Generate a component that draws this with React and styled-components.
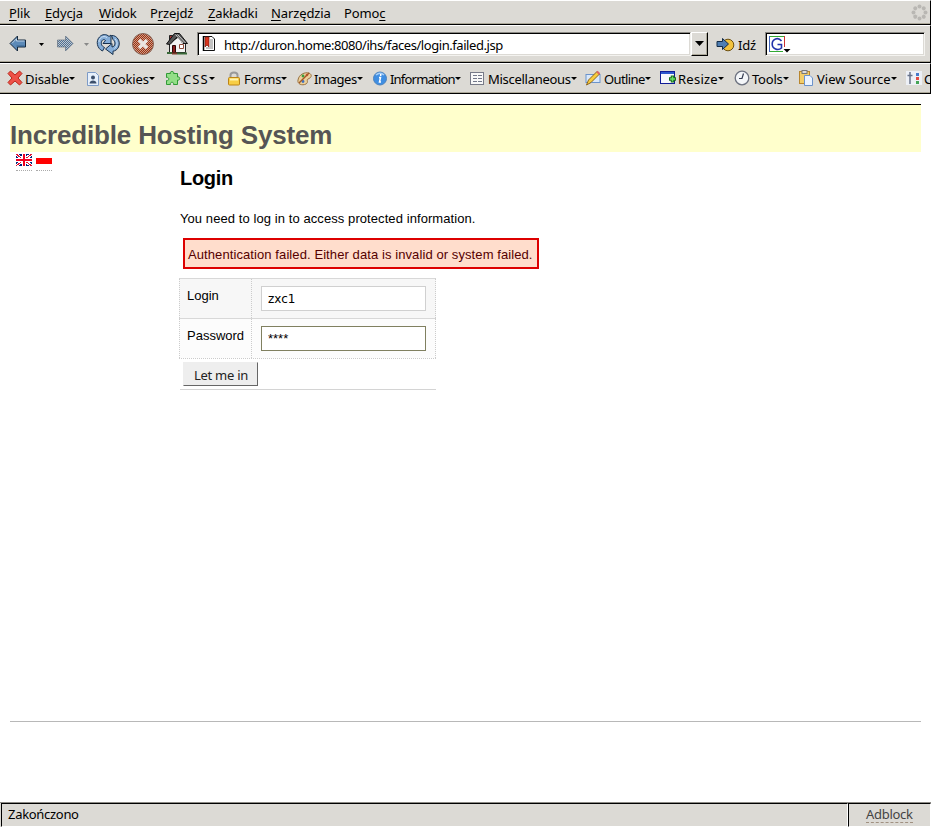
import React from "react";
import styled, { createGlobalStyle, css } from "styled-components";

const Global = createGlobalStyle`
  * { box-sizing: border-box; }
  html, body { margin: 0; height: 827px; overflow: hidden; background: #fff; }
`;

const ui = css`
  font-family: "Noto Sans", "Open Sans", sans-serif;
  font-size: 13px;
  line-height: 18px;
  color: #000;
  white-space: pre;
`;

const Window = styled.div`
  width: 931px;
  height: 827px;
  display: flex;
  flex-direction: column;
  background: #fff;
  overflow: hidden;
`;

const Bar = styled.div`
  ${ui}
  flex: none;
  display: flex;
  height: ${(p) => p.$h}px;
  padding-left: ${(p) => p.$pad || 0}px;
  background: #dcdad5;
  border-top: 1px solid #fff;
  border-right: 1px solid #000;
  border-bottom: 1px solid #000;
  box-shadow: inset 0 -1px 0 #aca899;
  overflow: hidden;
`;

const MenuItem = styled.div`
  flex: none;
  width: ${(p) => p.$w}px;
  padding-top: 3px;
  letter-spacing: -0.12px;
`;

const Key = styled.span`
  text-decoration: underline;
  text-underline-offset: 2px;
  text-decoration-thickness: 1px;
`;

const Throbber = styled.svg`
  flex: none;
  margin: 3px 2px 0 auto;
`;

const Slot = styled.div`
  flex: none;
  width: ${(p) => p.$w}px;
  padding-top: ${(p) => p.$top || 0}px;
  svg { display: block; }
`;

const Field = styled.div`
  flex: none;
  display: flex;
  width: ${(p) => p.$w}px;
  height: 24px;
  margin-top: 6px;
  background: #fff;
  border: 1px solid #8c8a85;
  border-right-color: #f4f3f0;
  border-bottom-color: #f4f3f0;
  box-shadow: inset 1px 1px 0 #000, inset -1px -1px 0 #dcdad5;
`;

const FieldIcon = styled.div`
  flex: none;
  width: ${(p) => p.$w}px;
  padding: ${(p) => p.$top}px 0 0 ${(p) => p.$left}px;
  svg { display: block; }
`;

const Url = styled.div`
  padding-top: 3px;
  letter-spacing: -0.44px;
`;

const DropButton = styled.div`
  flex: none;
  width: 17px;
  height: 24px;
  margin: 6px 8px 0 0;
  padding: 8px 0 0 3px;
  border: 1px solid #fff;
  border-right-color: #000;
  border-bottom-color: #000;
  box-shadow: inset -1px -1px 0 #aca899;
  svg { display: block; }
`;

const GoLabel = styled.div`
  flex: none;
  width: 28px;
  padding: 10px 0 0 1px;
  letter-spacing: -0.2px;
`;

const Tool = styled.div`
  flex: none;
  display: flex;
  width: ${(p) => p.$w}px;
`;

const ToolIcon = styled.div`
  flex: none;
  width: ${(p) => p.$w}px;
  padding-top: 6px;
  svg { display: block; }
`;

const ToolText = styled.div`
  padding-top: 6px;
  letter-spacing: ${(p) => p.$ls}px;
`;

const Caret = styled.span`
  flex: none;
  width: 0;
  height: 0;
  margin-top: 13px;
  border: 3px solid transparent;
  border-top-color: #000;
  border-bottom: 0;
`;

const Page = styled.main`
  flex: 1;
  min-height: 0;
  padding: 10px 10px 0;
  font-family: "Liberation Sans", Arial, sans-serif;
  font-size: 13px;
`;

const Banner = styled.header`
  height: 48px;
  border-top: 1px solid #000;
  background: #ffffcc;
`;

const Title = styled.h1`
  margin: 0;
  padding-top: 15px;
  font-size: 26px;
  line-height: 30px;
  letter-spacing: -0.17px;
  color: #555;
`;

const Columns = styled.div`
  display: flex;
  height: 569px;
`;

const Flags = styled.aside`
  width: 170px;
  padding: 2px 0 0 6px;
  display: flex;
  gap: 4px;
`;

const Flag = styled.a`
  display: block;
  height: 17px;
  border-bottom: 1px dotted #aaa;
  svg { display: block; }
`;

const Content = styled.section`
  padding-top: 14px;
`;

const Heading = styled.h2`
  margin: 0;
  font-size: 20px;
  line-height: 24px;
  letter-spacing: -0.3px;
`;

const Para = styled.p`
  margin: 21px 0 0;
  line-height: 16px;
  letter-spacing: 0.08px;
`;

const ErrorBox = styled.div`
  width: 356px;
  height: 31px;
  margin: 11px 0 0 3px;
  padding: 7px 0 0 3px;
  border: 2px solid #d00;
  background: #fdc;
  color: #500;
  line-height: 16px;
  letter-spacing: 0.09px;
  white-space: nowrap;
`;

const Form = styled.form`
  width: 257px;
  margin: 9px 0 0 -1px;
`;

const Row = styled.div`
  display: grid;
  grid-template-columns: 72px 1fr;
  height: 40px;
  background: ${(p) => p.$bg};
  border-top: 1px solid #d8d8d8;
  border-left: 1px dotted #ccc;
  border-right: 1px dotted #ccc;
`;

const Label = styled.label`
  padding: 9px 0 0 7px;
  line-height: 16px;
  border-right: 1px dotted #ccc;
`;

const Input = styled.input`
  ${ui}
  display: block;
  width: 165px;
  height: 25px;
  margin: 7px 0 0 9px;
  padding: 0 6px;
  border: 1px solid #d0d0d0;
  border-radius: 0;
  background: #fff;
  outline: none;
  font-family: "DejaVu Sans", sans-serif;
  font-size: 12px;
`;

const MaskedInput = styled(Input)`
  border-color: #808060;
  font-family: "Liberation Sans", Arial, sans-serif;
  font-size: 13px;
`;

const Actions = styled.div`
  height: 31px;
  padding: 3px 0 0 4px;
  border-top: 1px dotted #ccc;
`;

const Rule = styled.div`
  height: 1px;
  margin-left: 1px;
  background: #d4d4d4;
`;

const Submit = styled.button`
  ${ui}
  display: block;
  width: 75px;
  height: 24px;
  padding: 1px 0 0 1px;
  border: 1px solid #eee;
  border-right-color: #666;
  border-bottom-color: #666;
  background: #eee;
  color: #222;
  letter-spacing: -0.25px;
`;

const Footer = styled.footer`
  border-top: 1px solid #b8b8b8;
`;

const Status = styled.div`
  ${ui}
  flex: none;
  display: flex;
  height: 25px;
  padding-left: 1px;
  background: #dcdad5;
  border-top: 1px solid #8c8a85;
  letter-spacing: -0.3px;
`;

const StatusPane = styled.div`
  flex: none;
  width: ${(p) => p.$w}px;
  padding: 1px 0 0 ${(p) => p.$pad}px;
  border-top: 1px solid #000;
  border-left: 1px solid #000;
  border-right: 1px solid #fff;
  border-bottom: 1px solid #fff;
  color: ${(p) => p.$color || "#000"};
`;

const Adblock = styled.span`
  display: inline-block;
  height: 18px;
  border-bottom: 1px dashed #a09080;
`;

const BackArrow = () => (
  <svg width="18" height="18" viewBox="0 0 18 18">
    <path d="M1 8.500 8.500 1V5H16.500V12H8.500V16Z" fill="#5c8ab8" stroke="#15283c" />
    <path d="M3 8.300 7.500 3.800V6H15.500" fill="none" stroke="#bcd0e4" />
    <path d="M7.500 11H15.500" stroke="#34608c" />
  </svg>
);

const ForwardArrow = () => (
  <svg width="18" height="18" viewBox="0 0 18 18">
    <defs>
      <pattern id="grain" width="2" height="2" patternUnits="userSpaceOnUse">
        <path d="M0 0h1v1H0zM1 1h1v1H1z" fill="#4f6f92" />
      </pattern>
    </defs>
    <path d="M17 8.500 9.500 1V5H1.500V12H9.500V16Z" fill="#c0c8d0" stroke="#8b9096" />
    <path d="M17 8.500 9.500 1V5H1.500V12H9.500V16Z" fill="url(#grain)" />
  </svg>
);

const Tri = ({ c = "#000", w = 5, h = 3 }) => (
  <svg width={w} height={h} viewBox="0 0 6 3" preserveAspectRatio="none"><path d="M0 0H6L3 3Z" fill={c} /></svg>
);

const Reload = () => (
  <svg width="24" height="24" viewBox="0 0 24 24" strokeLinejoin="round">
    <g fill="#86aed8" stroke="#17304d">
      <path d="M6.500 18C1 15.500-.5 8 3.500 4 6 1 10.500.8 13 3.500L15 2V10.500H7L9.500 7.500C8 6 6 6.500 5.500 9 5 11 5.500 13 8.500 14.500Z" />
      <path d="M15.500 2.500C21 2 25 8.500 22.500 14 21.500 16.500 19 18 17 18.200V21.500L9.500 16 16 10.500V14C19.500 13.500 20 9 17 6.500Z" />
    </g>
    <path d="M3 9C3 5 7 2 11 4.500M19 6C22 9 21.500 13 18.500 15.500" fill="none" stroke="#d2e3f4" />
  </svg>
);

const Stop = () => (
  <svg width="24" height="24" viewBox="0 0 24 24">
    <defs>
      <pattern id="rust" width="2" height="2" patternUnits="userSpaceOnUse">
        <path d="M0 0h1v1H0zM1 1h1v1H1z" fill="#9c3210" />
      </pattern>
    </defs>
    <circle cx="12" cy="12" r="10.500" fill="#cd9c8a" />
    <circle cx="12" cy="12" r="10.500" fill="url(#rust)" stroke="#86665a" />
    <path d="M8 8l8 8M16 8l-8 8" stroke="#ebe5e0" strokeWidth="3.500" />
  </svg>
);

const Home = () => (
  <svg width="24" height="24" viewBox="0 0 24 24">
    <path d="M4.500 11V20.500H20.500V11L15 4Z" fill="#f3f3f3" stroke="#222" />
    <path d="M4.500 3.500H7.500V7L4.500 10Z" fill="#a33" stroke="#222" />
    <path d="M1.500 12 9.500 1.500H14.500L22.500 11.500H18L12.500 4.500 5 12.500Z" fill="#555" stroke="#111" />
    <path d="M10.500 2.500 18 11M12.500 2.500l8 8.500" stroke="#ccc" />
    <path d="M7.500 13.500h3v7h-3z" fill="#8b1d1d" stroke="#2a0808" />
    <path d="M14.500 12.500h4v4h-4z" fill="#fff" stroke="#8c4a3a" />
    <path d="M2 21h5M12 21.500h10" stroke="#386838" strokeWidth="2" />
    <path d="M7 21.500h5" stroke="#7a3a2a" strokeWidth="2" />
  </svg>
);

const Bookmark = () => (
  <svg width="14" height="17" viewBox="0 0 14 17">
    <path d="M1.500 1.500H10L12.500 4V15.500H1.500Z" fill="#fff" stroke="#111" />
    <path d="M3 2H7V12L5 10 3 12Z" fill="#d8351e" stroke="#771b11" strokeWidth=".7" />
    <path d="M8 5h3M8 7h3M8 9h3M8 11h3M4 13h7" stroke="#888" />
    <path d="M1.500 1v15" stroke="#000" strokeWidth="1.500" />
  </svg>
);

const Go = () => (
  <svg width="19" height="16" viewBox="0 0 19 16">
    <circle cx="12" cy="8" r="5.800" fill="#f3c23c" stroke="#6d5010" />
    <path d="M1 4.500H6.500V1.500L12.500 7 6.500 12.500V9.500H1Z" fill="#4f7eb2" stroke="#132c48" />
  </svg>
);

const Search = () => (
  <svg width="24" height="20" viewBox="0 0 24 20">
    <path d="M1 .5H16.500M1 15.500H15" stroke="#3a3" />
    <path d="M1.500 0V16" stroke="#46b" />
    <path d="M16.500 0V11" stroke="#c33" />
    <path d="M13.500 5C10 .5 4.200 3 4.200 8S10 15 13.500 12V8.500H9.500" fill="none" stroke="#23a" strokeWidth="1.600" />
    <path d="M15.500 13H22.500L19 16.500Z" />
  </svg>
);

const icons = {
  cross: <path d="M1 3.500 3.500 1 8 5 12.500 1 15 3.500 11 8 15 12.500 12.500 15 8 11 3.500 15 1 12.500 5 8Z" fill="#ee5148" stroke="#b9281c" />,
  cookie: <><path d="M1.500 2.500H9.500L12.500 5.500V15.500H1.500Z" fill="#e7f0fb" stroke="#7d9bc7" /><circle cx="7" cy="7.500" r="2" fill="#3c4f6b" /><path d="M3.500 13.500C3.500 9.500 10.500 9.500 10.500 13.500Z" fill="#3c4f6b" /></>,
  puzzle: <path d="M1.500 3.500H5.500C4 .8 10 .8 8.500 3.500H12.500V7C15.500 6 15.500 11 12.500 10V14.500H8.500C9.500 11.500 4.500 11.500 5.500 14.500H1.500V10.500C4.500 11.500 4.500 6.500 1.500 7.500Z" fill="#92df87" stroke="#319a36" />,
  lock: <><path d="M3.500 8V5Q3.500 2.500 7 2.500T10.500 5V8" fill="none" stroke="#999" strokeWidth="2" /><rect x="1.500" y="7.500" width="11" height="7.500" rx="1" fill="#f8ce45" stroke="#bd8415" /><path d="M3 9.500h8" stroke="#fff4b3" strokeWidth="2" /></>,
  palette: <><path d="M1 10C2 4 8 2 12 3 16 5 14 8 11 9 9 10 12 12 9 14 5 16 0 14 1 10Z" fill="#ecd19c" stroke="#9a7240" /><circle cx="6" cy="6" r="1.400" fill="#3d9f3d" /><circle cx="10" cy="5" r="1.300" fill="#e44b3e" /><circle cx="6" cy="11.500" r="1.400" fill="#3d71c0" /><path d="M2 13 12 3" stroke="#a35a24" strokeWidth="1.500" /></>,
  info: <><circle cx="8" cy="8.500" r="6.500" fill="#3f8ee2" stroke="#4c82bd" /><path d="M4 5Q8 1.500 12 5" fill="none" stroke="#a7d0fa" strokeWidth="1.500" /><path d="M8.700 4v2M7 7.500h1.500L7.500 12H9" fill="none" stroke="#fff" strokeWidth="1.500" /></>,
  list: <><rect x="1.500" y="2.500" width="13" height="12" fill="#f8f8f8" stroke="#777a88" /><path d="M4 5.500h4M9 5.500h4M4 8.500h4M9 8.500h4M4 11.500h4M9 11.500h4" stroke="#727789" /></>,
  pencil: <><rect x="1" y="4.500" width="14" height="8" fill="#d9e8fb" stroke="#6b93cc" /><path d="M1.500 15 3.500 10 12 1.500 14.500 4 6 12.500Z" fill="#f8cc3c" stroke="#8b6520" /><path d="M12 1.500l2.500 2.500" stroke="#d66" strokeWidth="2" /></>,
  resize: <><rect x=".5" y="1.500" width="14" height="12" fill="#f7f8fd" stroke="#111c96" /><path d="M1 3h13" stroke="#2d57ce" strokeWidth="2" /><path d="M12.500 5.500v7M9 9h7" stroke="#176b19" strokeWidth="3.500" /><path d="M12.500 6.500v5M10 9h5" stroke="#67e067" strokeWidth="1.500" /></>,
  clock: <><circle cx="8" cy="8" r="6.800" fill="#f4f6f9" stroke="#6d7280" strokeWidth="1.300" /><path d="M9.500 3.500 8 8.500H5" fill="none" stroke="#333b50" strokeWidth="1.200" /></>,
  paste: <><rect x="1.500" y="1.500" width="10" height="12" fill="#f3cd68" stroke="#b8862e" /><rect x="4" y=".5" width="5" height="3" fill="#ddd" stroke="#777" /><path d="M6.500 5.500H12L14.500 8V15.500H6.500Z" fill="#ebf3ff" stroke="#6c93cb" /></>,
  options: <><rect x="0" y="1" width="16" height="14" fill="#edf0f6" /><path d="M4 2v12M1.500 5.500h5" stroke="#68738b" strokeWidth="1.500" /><path d="M10 3h3v3h-3z" fill="#4779ca" /><path d="M10 7h3v3h-3z" fill="#e34b43" /><path d="M10 11h3v3h-3z" fill="#44a456" /></>,
};

const tools = [
  ["Disable", "cross", 79, 18, -0.1], ["Cookies", "cookie", 79, 16, -0.15], ["CSS", "puzzle", 62, 18, 1.1],
  ["Forms", "lock", 70, 17, -0.25], ["Images", "palette", 75, 17, -0.45], ["Information", "info", 97, 18, -0.8],
  ["Miscellaneous", "list", 116, 19, -0.28], ["Outline", "pencil", 75, 19, -0.6], ["Resize", "resize", 74, 18, 0.25],
  ["Tools", "clock", 64, 18, -0.2], ["View Source", "paste", 108, 19, 0], ["C", "options", 60, 18, 0],
];

const menus = [
  ["", "P", "lik", 36], ["", "E", "dycja", 54], ["", "W", "idok", 51], ["P", "r", "zejdź", 58],
  ["", "Z", "akładki", 63], ["", "N", "arzędzia", 73], ["Pomo", "c", "", 50],
];

export default function App() {
  return (
    <Window>
      <Global />
      <Bar $h={25} $pad={9}>
        {menus.map(([a, k, b, w]) => <MenuItem key={a + k + b} $w={w}>{a}<Key>{k}</Key>{b}</MenuItem>)}
        <Throbber width="17" height="17" viewBox="0 0 17 17">
          {[0, 45, 90, 135, 180, 225, 270, 315].map((r) => <circle key={r} cx="8.500" cy="2.500" r="2" fill="#b9b7b3" transform={`rotate(${r} 8.500 8.500)`} />)}
        </Throbber>
      </Bar>
      <Bar $h={38} $pad={9}>
        <Slot $w={30} $top={9}><BackArrow /></Slot>
        <Slot $w={17} $top={17}><Tri /></Slot>
        <Slot $w={28} $top={9}><ForwardArrow /></Slot>
        <Slot $w={12} $top={17}><Tri c="#888" /></Slot>
        <Slot $w={35} $top={7}><Reload /></Slot>
        <Slot $w={34} $top={6}><Stop /></Slot>
        <Slot $w={32} $top={6}><Home /></Slot>
        <Field $w={494}>
          <FieldIcon $w={26} $left={4} $top={2}><Bookmark /></FieldIcon>
          <Url>http://duron.home:8080/ihs/faces/login.failed.jsp</Url>
        </Field>
        <DropButton><Tri w={9} h={5} /></DropButton>
        <Slot $w={21} $top={11}><Go /></Slot>
        <GoLabel>Idź</GoLabel>
        <Field $w={160}><FieldIcon $w={28} $left={2} $top={3}><Search /></FieldIcon></Field>
      </Bar>
      <Bar $h={31} $pad={7}>
        {tools.map(([name, icon, w, off, ls]) => (
          <Tool key={name} $w={w}>
            <ToolIcon $w={off}><svg width="16" height="16" viewBox="0 0 16 16">{icons[icon]}</svg></ToolIcon>
            <ToolText $ls={ls}>{name}</ToolText><Caret />
          </Tool>
        ))}
      </Bar>
      <Page>
        <Banner><Title>Incredible Hosting System</Title></Banner>
        <Columns>
          <Flags>
            <Flag><svg width="16" height="12" viewBox="0 0 16 12" shapeRendering="crispEdges"><path fill="#00247d" d="M0 0h16v12H0z" /><path d="M0 0l16 12M16 0L0 12" stroke="#fff" strokeWidth="3" /><path d="M0 0l16 12M16 0L0 12" stroke="#e01030" /><path d="M8 0v12M0 6h16" stroke="#fff" strokeWidth="4" /><path d="M8 0v12M0 6h16" stroke="#f00020" strokeWidth="2" /></svg></Flag>
            <Flag><svg width="16" height="11" viewBox="0 0 16 11"><path fill="#fff" d="M0 0h16v4H0z" /><path fill="#f00" d="M0 4h16v6H0z" /></svg></Flag>
          </Flags>
          <Content>
            <Heading>Login</Heading>
            <Para>You need to log in to access protected information.</Para>
            <ErrorBox>Authentication failed. Either data is invalid or system failed.</ErrorBox>
            <Form>
              <Row $bg="#f7f7f7"><Label>Login</Label><Input defaultValue="zxc1" /></Row>
              <Row $bg="#fcfcfc"><Label>Password</Label><MaskedInput defaultValue="****" /></Row>
              <Actions><Submit type="button">Let me in</Submit></Actions>
              <Rule />
            </Form>
          </Content>
        </Columns>
        <Footer />
      </Page>
      <Status>
        <StatusPane $w={847} $pad={6}>Zakończono</StatusPane>
        <StatusPane $w={83} $pad={17} $color="#444"><Adblock>Adblock</Adblock></StatusPane>
      </Status>
    </Window>
  );
}
